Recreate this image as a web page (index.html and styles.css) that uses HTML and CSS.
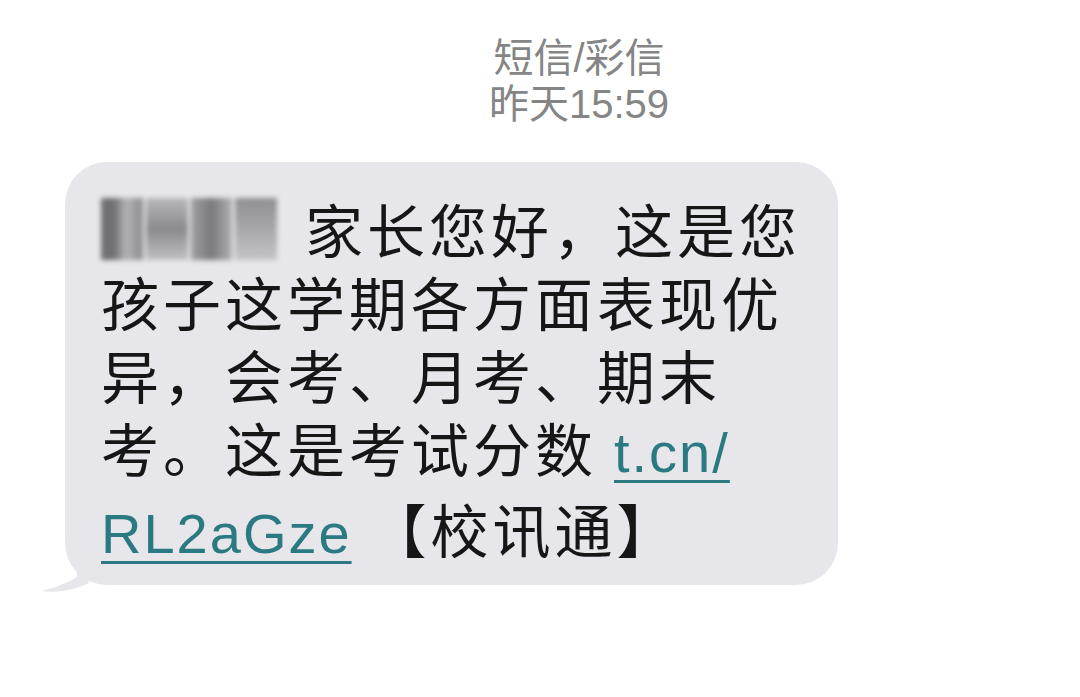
FILE: index.html
```html
<!DOCTYPE html>
<html lang="zh-CN">
<head>
<meta charset="utf-8">
<link rel="stylesheet" href="styles.css">
</head>
<body>
<div class="page">
  <header class="head">
    <div class="head-title">短信/彩信</div>
    <div class="head-time">昨天15:59</div>
  </header>
  <div class="bubble-wrap">
    <svg class="tail" width="60" height="60" viewBox="0 0 60 60">
      <path d="M40 0 L40 40 C30 46 20 50 4 54 C20 56 34 54 52 46 Z" fill="#e7e7eb"/>
    </svg>
    <div class="bubble">
      <div class="line"><span class="blur"><span class="b b1"></span><span class="b b2"></span><span class="b b3"></span><span class="b b4"></span></span>家长您好，这是您</div>
      <div class="line">孩子这学期各方面表现优</div>
      <div class="line">异，会考、月考、期末</div>
      <div class="line">考。这是考试分数 <span class="link">t.cn/</span></div>
      <div class="line"><span class="link">RL2aGze</span> 【校讯通】</div>
    </div>
  </div>
</div>
</body>
</html>
```
FILE: styles.css
```css
html, body {
  margin: 0;
  padding: 0;
  background: #ffffff;
}
.page {
  width: 1080px;
  height: 697px;
  overflow: hidden;
  font-family: "Noto Sans CJK SC", "Liberation Sans", sans-serif;
}
.head {
  padding-top: 35px;
  padding-left: 78px;
  text-align: center;
  color: #858585;
  font-size: 40px;
  line-height: 46px;
}
.head-title, .head-time {
  font-family: "Liberation Sans", "Noto Sans CJK SC", sans-serif;
}
.bubble-wrap {
  position: relative;
  margin-top: 35px;
  margin-left: 65px;
  width: 773px;
}
.tail {
  position: absolute;
  left: -28px;
  bottom: -12px;
}
.bubble {
  position: relative;
  background: #e7e7eb;
  border-radius: 42px;
  height: 423px;
  box-sizing: border-box;
  padding: 30px 0 0 36px;
  color: #161616;
  font-size: 58px;
  line-height: 73px;
  letter-spacing: 4px;
}
.line {
  white-space: nowrap;
  height: 73px;
}
.line:last-child {
  margin-top: 8px;
}
.link {
  font-family: "Liberation Sans", sans-serif;
  color: #2b7a82;
  text-decoration: underline;
  text-decoration-thickness: 3px;
  text-underline-offset: 8px;
  letter-spacing: 2px;
  font-size: 56px;
}
.blur {
  display: inline-flex;
  vertical-align: middle;
  width: 176px;
  height: 62px;
  margin-right: 28px;
  position: relative;
  top: -8px;
  gap: 3px;
  filter: blur(2.5px);
}
.b {
  flex: 1;
  background: #9a9a9c;
}
.b1 { background: linear-gradient(90deg, #707073 30%, #b4b4b7 60%, #8a8a8d); }
.b2 { background: linear-gradient(#b8b8bb, #8a8a8d 50%, #c0c0c3); }
.b3 { background: linear-gradient(90deg, #a0a0a3, #7a7a7d 50%, #b0b0b3); }
.b4 { background: linear-gradient(#8f8f92, #a8a8ab 50%, #c4c4c7); }
```
